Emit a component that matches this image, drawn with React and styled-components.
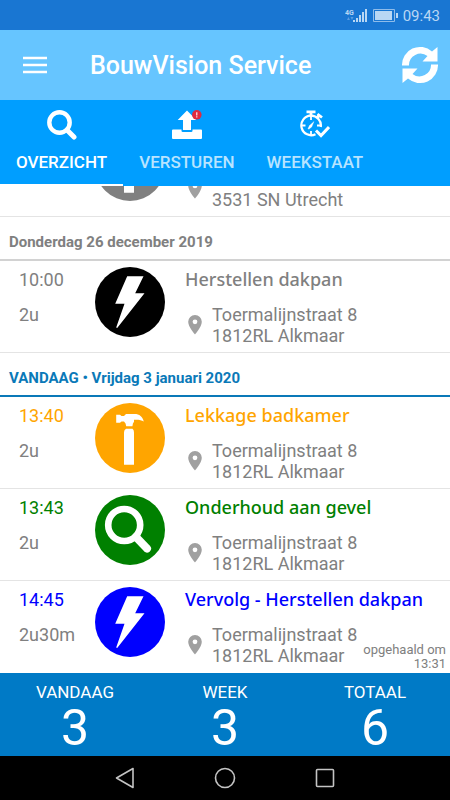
import React, { useState } from "react";
import styled, { createGlobalStyle } from "styled-components";

const sections = [
  {
    title: "",
    jobs: [{ id: 1, icon: "hammer", color: "gray", time: "", duration: "", name: "", street: "", city: "3531 SN Utrecht" }],
  },
  {
    title: "Donderdag 26 december 2019",
    jobs: [
      { id: 2, icon: "bolt", color: "black", muted: true, time: "10:00", duration: "2u", name: "Herstellen dakpan", street: "Toermalijnstraat 8", city: "1812RL Alkmaar" },
    ],
  },
  {
    title: "VANDAAG • Vrijdag 3 januari 2020",
    today: true,
    jobs: [
      { id: 3, icon: "hammer", color: "orange", time: "13:40", duration: "2u", name: "Lekkage badkamer", street: "Toermalijnstraat 8", city: "1812RL Alkmaar" },
      { id: 4, icon: "search", color: "green", time: "13:43", duration: "2u", name: "Onderhoud aan gevel", street: "Toermalijnstraat 8", city: "1812RL Alkmaar" },
      { id: 5, icon: "bolt", color: "blue", time: "14:45", duration: "2u30m", name: "Vervolg - Herstellen dakpan", street: "Toermalijnstraat 8", city: "1812RL Alkmaar" },
    ],
  },
];

const totals = [
  { label: "VANDAAG", value: 3 },
  { label: "WEEK", value: 3 },
  { label: "TOTAAL", value: 6 },
];

const SearchIcon = () => (
  <svg width="30" height="30" viewBox="0 0 30 30" fill="none" stroke="#fff" aria-hidden="true">
    <circle cx="12.5" cy="12.5" r="10.2" strokeWidth="4.4" />
    <path d="M20 20l7 7" strokeWidth="5" strokeLinecap="round" />
  </svg>
);

const UploadIcon = () => (
  <svg width="30" height="30" viewBox="0 0 30 30" aria-hidden="true">
    <path fill="#fff" d="M15 .5l9.300 9.500h-5.300v10h-8v-10H5.700z" />
    <path fill="#fff" d="M1 19.500h8.500v1.200q0 1.300 1.300 1.300h8.400q1.300 0 1.300-1.300v-1.200H29q1 0 1 1v7.500q0 1-1 1H1q-1 0-1-1v-7.500q0-1 1-1z" />
    <circle cx="24.800" cy="4.800" r="4.800" fill="#e0293e" />
    <path d="M24.800 2.300v3.200M24.800 6.300v1.200" stroke="#fff" strokeWidth="1.100" />
  </svg>
);

const WeekIcon = () => (
  <svg width="30" height="30" viewBox="0 0 30 30" fill="none" stroke="#fff" aria-hidden="true">
    <path d="M6.500 1.800h9M11 1.500v4" strokeWidth="2.800" />
    <path d="M17.500 4l4.500 3.500M19.500 5l-2.500 3" strokeWidth="2.800" />
    <path d="M15.500 24.200A9.800 9.800 0 1 1 20.800 17" strokeWidth="2.200" />
    <path d="M11 6v4M11 21v4M1.500 15.500h4M17 15.500h4" strokeWidth="1.800" />
    <path d="M14 11.500l-2.300 5.500-3 2.300-.7-.8 1.500-3z" fill="#fff" strokeWidth=".3" />
    <path d="M16 20.500l5 5 8-8.500" strokeWidth="3" />
  </svg>
);

const tabs = [
  { id: "overzicht", label: "OVERZICHT", Icon: SearchIcon },
  { id: "versturen", label: "VERSTUREN", Icon: UploadIcon },
  { id: "weekstaat", label: "WEEKSTAAT", Icon: WeekIcon },
];

const shapes = {
  bolt: <path fill="#fff" d="M32.200 9.300h16.300l-8.300 17h9.300L22.200 61l-1-.6 8.300-23.700h-9.300z" />,
  hammer: (
    <g fill="#fff">
      <path d="M21.200 11.700h3.800l1.500 1.300h2.500l2-2h8.500c5 0 8 2.500 9.300 7.500-2.500-1.600-5-2-9.800-1.800v2q-1.300 1-1.600 4.600h-6.200q-.2-3.200-2.200-4.800h-2.500L25 19.800h-3.800z" />
      <path d="M31 25.800h6.500q1.500 1.200 1.500 3.500v32.500H29V29.300q0-2.300 2-3.500z" />
    </g>
  ),
  search: (
    <g fill="none" stroke="#fff">
      <circle cx="29.200" cy="30" r="16" strokeWidth="6.600" />
      <path d="M41 42l11 11.500" strokeWidth="8" strokeLinecap="round" />
    </g>
  ),
};

function Job({ job }) {
  return (
    <Row>
      <Times>
        <Time $color={job.muted ? "gray" : job.color}>{job.time}</Time>
        <Line>{job.duration}</Line>
      </Times>
      <svg width="70" height="70" viewBox="0 0 70 70" aria-hidden="true">
        <circle cx="35" cy="35" r="35" fill={job.color} />
        {shapes[job.icon]}
      </svg>
      <Details>
        <JobName $color={job.muted ? "gray" : job.color}>{job.name}</JobName>
        <Address>
          <svg width="14" height="20" viewBox="0 0 14 20" aria-hidden="true">
            <path fill="#a0a0a0" fillRule="evenodd" d="M7 0a6.800 6.800 0 0 0-6.800 6.800C.2 11.900 7 19.500 7 19.500s6.800-7.600 6.800-12.700A6.800 6.800 0 0 0 7 0zm0 4.400a2.400 2.400 0 1 1 0 4.800 2.400 2.400 0 0 1 0-4.800z" />
          </svg>
          <div>
            <Line>{job.street}</Line>
            <Line>{job.city}</Line>
          </div>
        </Address>
      </Details>
    </Row>
  );
}

function App() {
  const [active, setActive] = useState("overzicht");

  return (
    <Page>
      <GlobalStyle />
      <StatusBar>
        <svg width="54" height="16" viewBox="0 0 54 16" fill="#b9d7f4" aria-hidden="true">
          <text x="0" y="7" fontSize="7" fontWeight="700" fontFamily="Roboto, sans-serif">4G</text>
          <path opacity=".4" d="M2 12l1.500-3L5 12zM5.500 9l1.500 3 1.500-3z" />
          <path d="M8 12h2v2H8zM11 10h2v4h-2zM14 7h2v7h-2zM17 4h2v10h-2zM20 1h2v13h-2z" />
          <path fill="none" stroke="#8fbcea" d="M28.500 1.500h21v12h-21z" />
          <path d="M30 3h17v9H30zM51 5h2v5h-2z" />
        </svg>
        <span>09:43</span>
      </StatusBar>
      <Header>
        <IconButton aria-label="Menu">
          <svg width="24" height="18" viewBox="0 0 24 18" aria-hidden="true">
            <path d="M0 2h24M0 9h24M0 16h24" stroke="#fff" strokeWidth="2.400" />
          </svg>
        </IconButton>
        <h1>BouwVision Service</h1>
        <IconButton aria-label="Vernieuwen">
          <svg width="38" height="38" viewBox="0 0 38 38" fill="#fff" aria-hidden="true">
            <path d="M1 19.500A18 18 0 0 1 31 5.500L36.500 1v14.500H21.500l5-5.500A11.500 11.500 0 0 0 8 19.500z" />
            <path d="M37 18.500A18 18 0 0 1 7 32.500L1.500 37V22.500H16.500l-5 5.500A11.500 11.500 0 0 0 30 18.500z" />
          </svg>
        </IconButton>
      </Header>
      <Tabs>
        {tabs.map(({ id, label, Icon }) => (
          <Tab key={id} $active={active === id} onClick={() => setActive(id)}>
            <Icon />
            <span>{label}</span>
          </Tab>
        ))}
      </Tabs>
      <Main>
        {sections.map((section, i) => (
          <section key={i}>
            {section.title && <DayTitle $today={section.today}>{section.title}</DayTitle>}
            <JobList>
              {section.jobs.map((job) => (
                <Job key={job.id} job={job} />
              ))}
            </JobList>
          </section>
        ))}
        <Fetched>
          opgehaald om
          <br />
          13:31
        </Fetched>
      </Main>
      <Totals>
        {totals.map((total) => (
          <Total key={total.label}>
            <dt>{total.label}</dt>
            <dd>{total.value}</dd>
          </Total>
        ))}
      </Totals>
      <NavBar>
        <IconButton aria-label="Terug">
          <svg width="22" height="22" viewBox="0 0 22 22" fill="none" stroke="#c4c4c4" strokeWidth="1.600" aria-hidden="true">
            <path strokeLinejoin="round" d="M2.500 11L19 1.500v19z" />
          </svg>
        </IconButton>
        <IconButton aria-label="Start">
          <svg width="22" height="22" viewBox="0 0 22 22" fill="none" stroke="#c4c4c4" strokeWidth="1.600" aria-hidden="true">
            <circle cx="11" cy="11" r="9.500" />
          </svg>
        </IconButton>
        <IconButton aria-label="Recente apps">
          <svg width="22" height="22" viewBox="0 0 22 22" fill="none" stroke="#c4c4c4" strokeWidth="1.600" aria-hidden="true">
            <rect x="2.500" y="2.500" width="17" height="17" rx="1" />
          </svg>
        </IconButton>
      </NavBar>
    </Page>
  );
}

export default App;

const GlobalStyle = createGlobalStyle`
  * {
    box-sizing: border-box;
  }

  body {
    margin: 0;
    font-family: Roboto, sans-serif;
    background: #fff;
  }

  h1, h2, h3, p, ul, dl, dd {
    margin: 0;
    padding: 0;
  }

  svg {
    display: block;
    flex-shrink: 0;
  }
`;

const Page = styled.div`
  display: flex;
  flex-direction: column;
  height: 100vh;
`;

const StatusBar = styled.div`
  display: flex;
  align-items: center;
  justify-content: flex-end;
  gap: 4px;
  height: 30px;
  padding: 2px 10px 0;
  background: #1976d2;
  color: #b9d7f4;
  font-size: 15px;
`;

const Header = styled.header`
  display: flex;
  align-items: center;
  height: 70px;
  padding: 0 11px 0 23px;
  background: #66c5ff;
  color: #fff;

  h1 {
    flex: 1;
    margin-left: 43px;
    font-size: 25px;
    font-weight: 500;
    line-height: 32px;
    padding-top: 2px;
  }
`;

const IconButton = styled.button`
  padding: 0;
  border: none;
  background: none;
  cursor: pointer;
`;

const Tabs = styled.nav`
  display: flex;
  height: 86px;
  background: #009eff;
`;

const Tab = styled.button`
  display: flex;
  flex-direction: column;
  align-items: center;
  gap: 12px;
  padding: 10px 16px 0;
  border: none;
  border-bottom: 2px solid ${(props) => (props.$active ? "#fff" : "transparent")};
  background: none;
  color: ${(props) => (props.$active ? "#fff" : "#b8e4ff")};
  font-family: inherit;
  font-size: 17px;
  font-weight: 500;
  line-height: 20px;
  cursor: pointer;
`;

const Main = styled.main`
  position: relative;
  display: flex;
  flex: 1;
  flex-direction: column;
  justify-content: flex-end;
  min-height: 0;
  overflow: hidden;

  section {
    flex-shrink: 0;
  }
`;

const DayTitle = styled.h2`
  height: 44px;
  padding: 0 9px;
  border-bottom: 2px solid ${(props) => (props.$today ? "#0a79b8" : "#d2d2d2")};
  color: ${(props) => (props.$today ? "#0a79b8" : "gray")};
  font-size: 15px;
  font-weight: 700;
  line-height: 50px;
`;

const JobList = styled.ul`
  list-style: none;
`;

const Row = styled.li`
  display: grid;
  grid-template-columns: 76px 90px 1fr;
  height: 92px;
  padding: 6px 0 0 19px;
  border-bottom: 1px solid #e4e4e4;

  section:last-of-type &:last-child {
    border-bottom-color: transparent;
  }
`;

const Line = styled.p`
  min-height: 21px;
  color: gray;
  font-size: 18px;
  line-height: 21px;
`;

const Times = styled.div`
  display: flex;
  flex-direction: column;
  gap: 12px;
  padding-top: 1px;
`;

const Time = styled.p`
  min-height: 24px;
  color: ${(props) => props.$color};
  font-size: 18px;
  line-height: 24px;
`;

const Details = styled.div`
  display: flex;
  flex-direction: column;
  gap: 12px;
`;

const JobName = styled.h3`
  min-height: 25px;
  color: ${(props) => props.$color};
  font-family: "Noto Sans", sans-serif;
  font-size: 18px;
  font-weight: 500;
  line-height: 25px;
`;

const Address = styled.div`
  display: flex;
  align-items: center;
  gap: 10px;
  padding-left: 3px;
`;

const Fetched = styled.p`
  position: absolute;
  right: 4px;
  bottom: 2px;
  color: gray;
  font-size: 13px;
  line-height: 14px;
  text-align: right;
`;

const Totals = styled.dl`
  display: grid;
  grid-template-columns: repeat(3, 1fr);
  height: 83px;
  background: #007ac6;
  color: #fff;
  text-align: center;
`;

const Total = styled.div`
  padding-top: 9px;

  dt {
    font-size: 17px;
    line-height: 20px;
  }

  dd {
    font-size: 50px;
    line-height: 52px;
  }
`;

const NavBar = styled.footer`
  display: flex;
  align-items: center;
  justify-content: center;
  gap: 78px;
  height: 44px;
  background: #000;
`;
